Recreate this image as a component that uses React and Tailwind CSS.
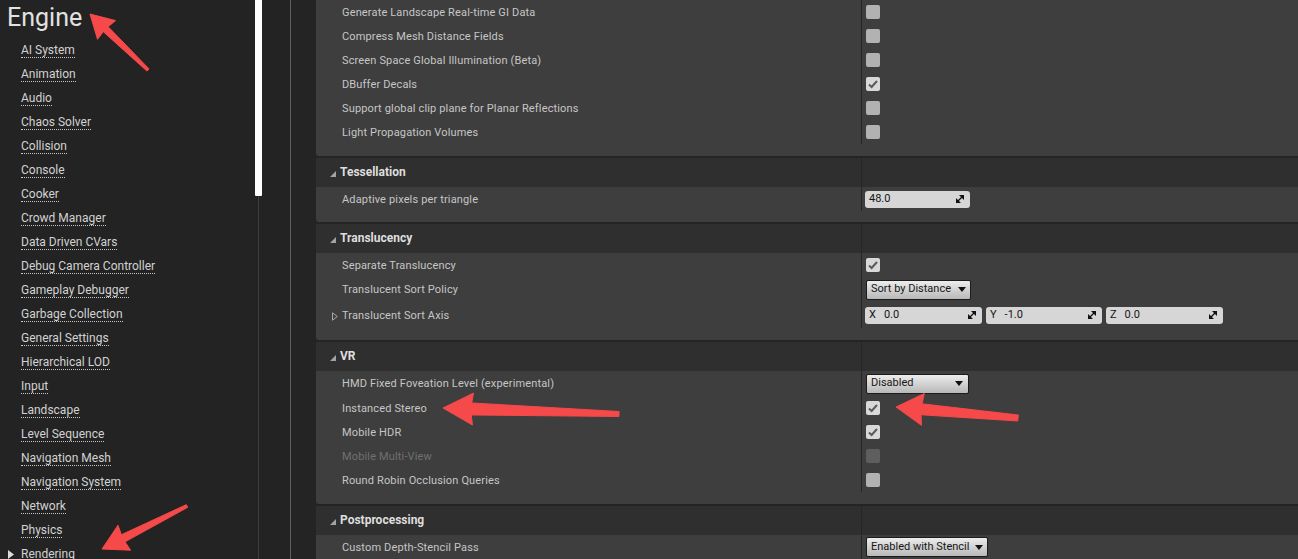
import React from 'react';

const sidebarItems = [
  'AI System', 'Animation', 'Audio', 'Chaos Solver', 'Collision', 'Console', 'Cooker',
  'Crowd Manager', 'Data Driven CVars', 'Debug Camera Controller', 'Gameplay Debugger',
  'Garbage Collection', 'General Settings', 'Hierarchical LOD', 'Input', 'Landscape',
  'Level Sequence', 'Navigation Mesh', 'Navigation System', 'Network', 'Physics', 'Rendering',
];

// red annotation arrows: tail, tip, head length, head half width, neck half width, tail half width
const arrows = [
  [148, 70, 90, 14, 23, 13, 3.5, 1.5],
  [187, 506, 102, 549, 25, 14, 4, 1.5],
  [619, 414, 443, 408, 30, 16, 6, 2.5],
  [1018, 418, 896, 407, 27, 16, 5.5, 3],
];

function arrowPoints([tx, ty, px, py, head, headHalf, neckHalf, tailHalf]) {
  const len = Math.hypot(px - tx, py - ty);
  const ux = (px - tx) / len;
  const uy = (py - ty) / len;
  const nx = -uy;
  const ny = ux;
  const bx = px - ux * head;
  const by = py - uy * head;
  const kx = px - ux * head * 0.95;
  const ky = py - uy * head * 0.95;
  return [
    [px, py],
    [bx + nx * headHalf, by + ny * headHalf],
    [kx + nx * neckHalf, ky + ny * neckHalf],
    [tx + nx * tailHalf, ty + ny * tailHalf],
    [tx - nx * tailHalf, ty - ny * tailHalf],
    [kx - nx * neckHalf, ky - ny * neckHalf],
    [bx - nx * headHalf, by - ny * headHalf],
  ].map((p) => p.join(',')).join(' ');
}

function DragIcon() {
  return (
    <svg width="8" height="8" viewBox="0 0 8 8" className="shrink-0">
      <path d="M3 0H8V5Z M0 3V8H5Z" fill="#111" />
      <path d="M2 6L6 2" stroke="#111" strokeWidth="1.2" />
    </svg>
  );
}

function Checkbox({ checked, disabled }) {
  const bg = disabled ? 'bg-[#5e5e5e]' : checked ? 'bg-[#d8d8d8]' : 'bg-[#b2b2b2]';
  return (
    <div className={`ml-[1px] w-[14px] h-[14px] rounded-[2px] flex items-center justify-center ${bg}`}>
      {checked && (
        <svg width="12" height="12" viewBox="0 0 12 12">
          <path d="M2 6.5L4.6 9L10 3" fill="none" stroke="#5b5b5b" strokeWidth="2" />
        </svg>
      )}
    </div>
  );
}

function Dropdown({ label, className }) {
  return (
    <div className={`ml-[1px] h-[20px] flex items-center justify-between pl-[4px] pr-[4px] rounded-[2px] border border-[#1c1c1c] bg-linear-to-b from-[#ededed] to-[#b8b8b8] text-[11px] text-[#161616] ${className}`}>
      <span>{label}</span>
      <svg width="8" height="5" viewBox="0 0 8 5">
        <path d="M0 0H8L4 5Z" fill="#111" />
      </svg>
    </div>
  );
}

function NumberBox({ axis, value, className }) {
  return (
    <div className={`h-[17px] flex items-center justify-between pl-[4px] pr-[6px] rounded-[3px] bg-[#d6d6d6] text-[11px] text-[#151515] ${className}`}>
      <span className="flex gap-[8px]">
        {axis && <span>{axis}</span>}
        <span>{value}</span>
      </span>
      <DragIcon />
    </div>
  );
}

function Row({ label, h = 'h-[24px]', dim, expandable, children }) {
  return (
    <div className={`flex ${h}`}>
      <div className="w-[545px] shrink-0 flex items-center pl-[16px] pt-[2px]">
        <div className="w-[10px] flex items-center">
          {expandable && (
            <svg width="6" height="9" viewBox="0 0 6 9">
              <path d="M0.5 0.8L5.3 4.5L0.5 8.2Z" fill="none" stroke="#a9a9a9" strokeWidth="1" />
            </svg>
          )}
        </div>
        <span className={`text-[11px] tracking-[0.15px] ${dim ? 'text-[#707070]' : 'text-[#c6c6c6]'}`}>{label}</span>
      </div>
      <div className="w-px shrink-0 bg-[#262626]" />
      <div className="flex-1 flex items-center gap-[4px] pl-[3px]">{children}</div>
    </div>
  );
}

function Section({ title, pb = 'pb-[12px]', children }) {
  return (
    <>
      <div className="mt-[2px] h-[29px] shrink-0 flex bg-[#2f2f2f]">
        <div className="w-[545px] shrink-0 flex items-center pl-[14px] gap-[4px] pb-[2px]">
          <svg width="6" height="6" viewBox="0 0 6 6" className="mt-[5px]">
            <path d="M0 6H6V0Z" fill="#a3a3a3" />
          </svg>
          <span className="text-[12px] font-bold text-[#dedede]">{title}</span>
        </div>
        <div className="w-px shrink-0 bg-[#262626]" />
      </div>
      <div className={`bg-[#3e3e3e] rounded-bl-[3px] ${pb}`}>{children}</div>
    </>
  );
}

export default function App() {
  return (
    <div className="relative w-[1298px] h-[559px] overflow-hidden flex bg-[#232323] font-['Roboto',sans-serif]">
      {/* sidebar */}
      <div className="w-[255px] shrink-0 flex flex-col">
        <div className="h-[38px] shrink-0 pl-[7px] pt-[1px] text-[25px] leading-[34px] text-[#e2e2e2]">Engine</div>
        {sidebarItems.map((item) => (
          <div key={item} className="h-[24px] shrink-0 flex items-center pl-[7px]">
            <div className="w-[14px] flex items-center">
              {item === 'Rendering' && (
                <svg width="6" height="9" viewBox="0 0 6 9" className="ml-[1px]">
                  <path d="M0 0L6 4.5L0 9Z" fill="#dcdcdc" />
                </svg>
              )}
            </div>
            <span className="text-[12px] leading-[14px] text-[#d2d2d2] border-b border-dotted border-[#c8c8c8]">{item}</span>
          </div>
        ))}
      </div>

      {/* scrollbar */}
      <div className="w-[7px] shrink-0 flex flex-col items-center">
        <div className="w-[7px] h-[196px] bg-white rounded-b-[1px]" />
        <div className="w-px flex-1 bg-[#3d3d3d]" />
      </div>
      <div className="w-[28px] shrink-0" />
      <div className="w-px shrink-0 bg-[#5e5e5e]" />
      <div className="w-[25px] shrink-0 bg-[#242424]" />

      {/* details panel */}
      <div className="flex-1 flex flex-col bg-[#242424]">
        <div className="bg-[#3e3e3e] rounded-bl-[3px] pb-[12px]">
          <Row label="Generate Landscape Real-time GI Data"><Checkbox /></Row>
          <Row label="Compress Mesh Distance Fields"><Checkbox /></Row>
          <Row label="Screen Space Global Illumination (Beta)"><Checkbox /></Row>
          <Row label="DBuffer Decals"><Checkbox checked /></Row>
          <Row label="Support global clip plane for Planar Reflections"><Checkbox /></Row>
          <Row label="Light Propagation Volumes"><Checkbox /></Row>
        </div>

        <Section title="Tessellation" pb="pb-[11px]">
          <Row label="Adaptive pixels per triangle">
            <NumberBox value="48.0" className="w-[105px]" />
          </Row>
        </Section>

        <Section title="Translucency">
          <Row label="Separate Translucency"><Checkbox checked /></Row>
          <Row label="Translucent Sort Policy" h="h-[25px]">
            <Dropdown label="Sort by Distance" className="w-[105px]" />
          </Row>
          <Row label="Translucent Sort Axis" h="h-[26px]" expandable>
            <NumberBox axis="X" value="0.0" className="w-[117px]" />
            <NumberBox axis="Y" value="-1.0" className="w-[116px]" />
            <NumberBox axis="Z" value="0.0" className="w-[117px]" />
          </Row>
        </Section>

        <Section title="VR">
          <Row label="HMD Fixed Foveation Level (experimental)" h="h-[25px]">
            <Dropdown label="Disabled" className="w-[103px] pr-[5px]" />
          </Row>
          <Row label="Instanced Stereo"><Checkbox checked /></Row>
          <Row label="Mobile HDR"><Checkbox checked /></Row>
          <Row label="Mobile Multi-View" dim><Checkbox disabled /></Row>
          <Row label="Round Robin Occlusion Queries"><Checkbox /></Row>
        </Section>

        <Section title="Postprocessing">
          <Row label="Custom Depth-Stencil Pass">
            <Dropdown label="Enabled with Stencil" className="w-[122px]" />
          </Row>
        </Section>
      </div>

      {/* annotation arrows */}
      <svg className="absolute inset-0 pointer-events-none" width="1298" height="559" viewBox="0 0 1298 559">
        {arrows.map((a, i) => (
          <polygon key={i} points={arrowPoints(a)} fill="#f5494a" strokeLinejoin="round" stroke="#f5494a" strokeWidth="1" />
        ))}
      </svg>
    </div>
  );
}
